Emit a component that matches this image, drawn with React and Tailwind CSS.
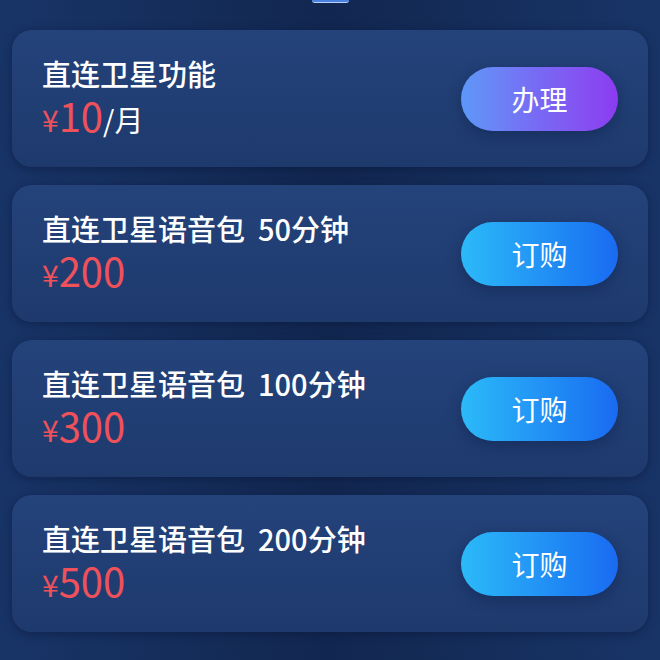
import React from "react";

const items = [
  { title: "直连卫星功能", price: "10", unit: "/月", action: "办理", kind: "purple" },
  { title: "直连卫星语音包  50分钟", price: "200", action: "订购", kind: "blue" },
  { title: "直连卫星语音包  100分钟", price: "300", action: "订购", kind: "blue" },
  { title: "直连卫星语音包  200分钟", price: "500", action: "订购", kind: "blue" },
];

function ActionButton({ label, kind }) {
  const base =
    "w-[157px] h-[64px] rounded-full flex items-center justify-center text-[28px] text-white shrink-0 shadow-[0_4px_14px_rgba(10,20,60,0.35)]";
  if (kind === "purple") {
    return (
      <button className={base + " bg-linear-to-r from-[#5c98f7] via-[#7868f4] to-[#8c3af0]"}>
        {label}
      </button>
    );
  }
  return (
    <button className={base + " bg-linear-to-r from-[#2cbaf8] via-[#2393f5] to-[#1b6af1]"}>
      {label}
    </button>
  );
}

export default function App() {
  return (
    <div
      className="w-[660px] h-[660px] overflow-hidden bg-linear-to-r from-[#183467] via-[#122750] to-[#183467]"
      style={{ fontFamily: '"Noto Sans CJK SC", "Noto Sans", sans-serif' }}
    >
      {/* top tab indicator, cut off */}
      <div className="mx-auto w-[37px] h-[3px] rounded-b-sm bg-[#4b82e0] border-b border-[#b9d2ff]" />

      <div className="mt-[27px] px-[12px] flex flex-col gap-[18px]">
        {items.map((item, i) => (
          <div
            key={i}
            className="h-[137px] rounded-[20px] bg-linear-to-b from-[#24437b] to-[#1e3a6d] shadow-[0_2px_10px_rgba(5,15,45,0.4)] flex items-center justify-between px-[30px]"
          >
            <div className="flex flex-col">
              <div className="text-[29px] leading-[32px] font-medium text-white whitespace-pre -mt-[2px]">
                {item.title}
              </div>
              <div className="flex items-baseline mt-[6px] leading-[40px]">
                <span className="text-[30px] text-[#ef515b]">¥</span>
                <span className="text-[40px] text-[#ef515b]">{item.price}</span>
                {item.unit && <span className="text-[29px] text-white">{item.unit}</span>}
              </div>
            </div>
            <ActionButton label={item.action} kind={item.kind} />
          </div>
        ))}
      </div>
    </div>
  );
}
